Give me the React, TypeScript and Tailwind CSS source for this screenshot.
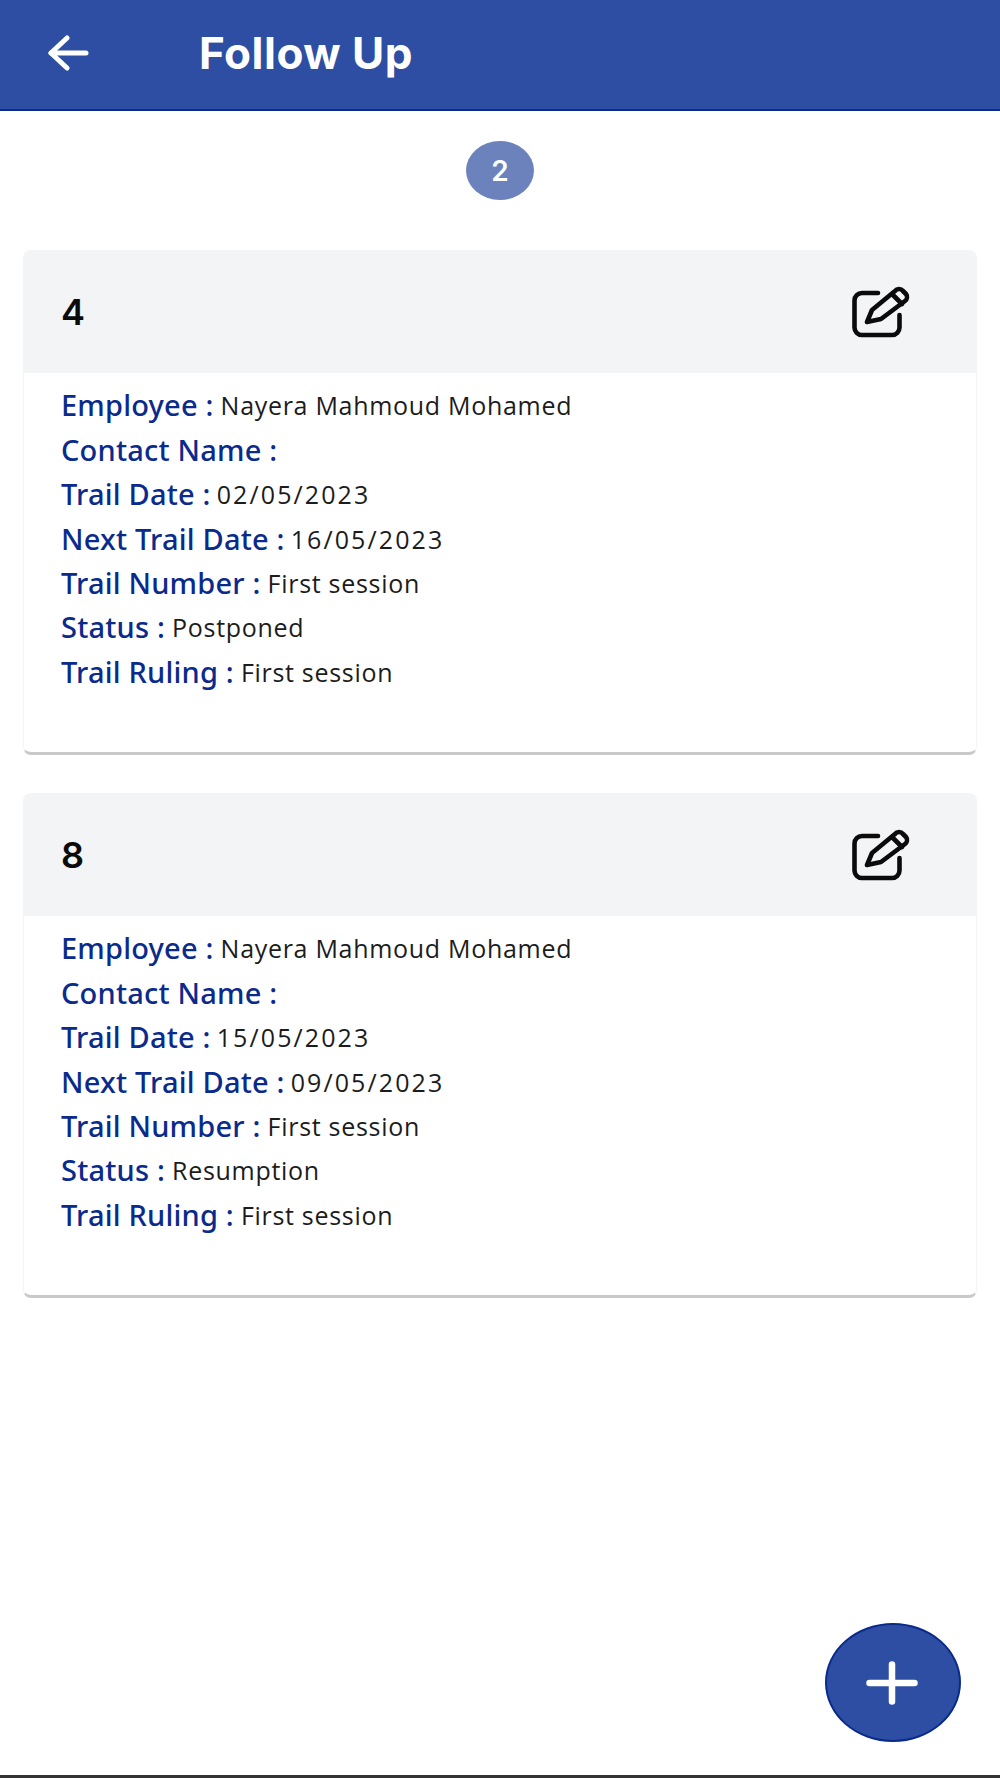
const rows4 = [
  ["Employee :", "Nayera Mahmoud Mohamed"],
  ["Contact Name :", ""],
  ["Trail Date :", "02/05/2023"],
  ["Next Trail Date :", "16/05/2023"],
  ["Trail Number :", "First session"],
  ["Status :", "Postponed"],
  ["Trail Ruling :", "First session"],
];

const rows8 = [
  ["Employee :", "Nayera Mahmoud Mohamed"],
  ["Contact Name :", ""],
  ["Trail Date :", "15/05/2023"],
  ["Next Trail Date :", "09/05/2023"],
  ["Trail Number :", "First session"],
  ["Status :", "Resumption"],
  ["Trail Ruling :", "First session"],
];

function EditIcon() {
  return (
    <svg viewBox="0 0 58 52" className="w-[58px] h-[52px]" fill="none" stroke="#0b0b0b" strokeWidth="4.6" strokeLinecap="round" strokeLinejoin="round">
      <path d="M26 7H10a7.5 7.5 0 0 0-7.5 7.5v27A7.5 7.5 0 0 0 10 49h30a7.5 7.5 0 0 0 7.5-7.5V29" />
      <path d="M15 36l5-12L43 5a5 5 0 0 1 8 0l3 3a5 5 0 0 1-1 7L29 33z" />
      <path d="M40 8l10 10" />
    </svg>
  );
}

function Card({ id, rows }: { id: string; rows: string[][] }) {
  return (
    <div className="mx-[23px] h-[505px] rounded-lg bg-white border border-gray-100 border-b-[3px] border-b-[#c9c9c9] overflow-hidden">
      <div className="h-[122px] bg-[#f3f4f6] flex items-center justify-between pl-[37px] pr-[66px]">
        <span className="font-['Inter',sans-serif] font-semibold text-[36px] text-[#0b0b0b]">{id}</span>
        <EditIcon />
      </div>
      <div className="pl-[37px] pt-[10px]">
        {rows.map((row) => (
          <div key={row[0]} className="flex items-center h-[44.4px] whitespace-nowrap">
            <span className="font-['Noto_Sans',sans-serif] font-medium text-[29px] tracking-[0.2px] text-[#0a2a8c]">{row[0]}</span>
            <span className={row[0].includes("Date") ? "ml-[6px] mt-[2px] font-['Open_Sans',sans-serif] text-[25px] tracking-[2.1px] text-[#1c1c1c]" : "ml-[7px] mt-[2px] font-['Open_Sans',sans-serif] text-[25px] tracking-[0.7px] text-[#1c1c1c]"}>{row[1]}</span>
          </div>
        ))}
      </div>
    </div>
  );
}

export default function App() {
  return (
    <div className="relative h-[1778px] bg-white overflow-hidden">
      <div className="h-[111px] bg-[#2d4ea2] border-b-2 border-b-[#0a2a8c] flex items-center pl-[47px] pb-[4px]">
        <svg viewBox="0 0 42 36" className="w-[42px] h-[36px]" fill="none" stroke="white" strokeWidth="5" strokeLinecap="round" strokeLinejoin="round">
          <path d="M39 18H4" />
          <path d="M20 3L4 18l16 15" />
        </svg>
        <span className="ml-[110px] font-['Inter',sans-serif] font-bold text-[44px] tracking-[0.5px] text-white">Follow Up</span>
      </div>
      <div className="flex justify-center mt-[30px] mb-[50px]">
        <div className="w-[68px] h-[59px] rounded-[50%] bg-[#6b82bd] flex items-center justify-center font-['Inter',sans-serif] font-semibold text-[28px] text-white">
          2
        </div>
      </div>
      <div className="flex flex-col gap-[38px]">
        <Card id="4" rows={rows4} />
        <Card id="8" rows={rows8} />
      </div>
      <button className="absolute left-[825px] top-[1623px] w-[136px] h-[119px] rounded-[50%] bg-[#2d4ea2] border-2 border-[#0a2a8c] flex items-center justify-center">
        <svg viewBox="0 0 52 44" className="w-[52px] h-[44px] -ml-[2px]" fill="none" stroke="white" strokeWidth="6.5" strokeLinecap="round">
          <path d="M3.5 22h45" />
          <path d="M26 3.5v37" />
        </svg>
      </button>
      <div className="absolute left-0 right-0 bottom-0 h-[3px] bg-[#333333]" />
    </div>
  );
}
